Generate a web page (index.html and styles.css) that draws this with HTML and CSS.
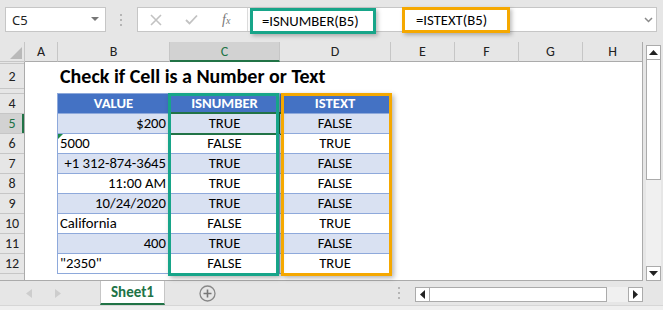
FILE: index.html
```html
<!DOCTYPE html>
<html lang="en">

<head>
    <meta charset="UTF-8">
    <title>Check if Cell is a Number or Text</title>
    <link rel="stylesheet" href="styles.css">
</head>

<body>
    <div class="app">
        <!-- name box + formula bar -->
        <div class="toolbar">
            <div class="namebox">
                <span>C5</span>
                <svg width="8" height="5" viewBox="0 0 8 5"><polygon points="0,0 8,0 4,4" fill="#777"></polygon></svg>
            </div>
            <div class="grip">
                <svg width="3" height="12" viewBox="0 0 3 12"><rect x="0" y="0" width="2" height="2" fill="#b5b5b5"></rect><rect x="0" y="5" width="2" height="2" fill="#b5b5b5"></rect><rect x="0" y="10" width="2" height="2" fill="#b5b5b5"></rect></svg>
            </div>
            <div class="fbar">
                <div class="fbtns">
                    <svg class="ico-x" width="12" height="12" viewBox="0 0 12 12"><path d="M1 1 L11 11 M11 1 L1 11" stroke="#c2c2c2" stroke-width="1.6" fill="none"></path></svg>
                    <svg class="ico-ok" width="13" height="11" viewBox="0 0 13 11"><path d="M1 6 L4.5 9.5 L12 1.5" stroke="#c2c2c2" stroke-width="1.8" fill="none"></path></svg>
                    <span class="fx">f<small>x</small></span>
                </div>
                <div class="finput">
                    <span class="fbox fbox-green">=ISNUMBER(B5)</span>
                    <span class="fbox fbox-orange">=ISTEXT(B5)</span>
                    <svg class="chev" width="9" height="6" viewBox="0 0 9 6"><path d="M1 1 L4.5 4.5 L8 1" stroke="#8a8a8a" stroke-width="1.5" fill="none"></path></svg>
                </div>
            </div>
        </div>

        <!-- sheet -->
        <div class="main">
            <div class="sheet">
                <div class="corner">
                    <svg width="25" height="20" viewBox="0 0 25 20"><polygon points="10,17 22,17 22,5" fill="#b9b9b9"></polygon></svg>
                </div>
                <div class="colheads">
                    <div class="ch ch-a">A</div>
                    <div class="ch ch-b">B</div>
                    <div class="ch ch-c on">C</div>
                    <div class="ch ch-d">D</div>
                    <div class="ch ch-e">E</div>
                    <div class="ch ch-e">F</div>
                    <div class="ch ch-e">G</div>
                    <div class="ch ch-h">H</div>
                </div>
                <div class="rowheads">
                    <!-- 1, 3행은 높이가 작아 번호가 안보임 -->
                    <div class="rh"></div>
                    <div class="rh">2</div>
                    <div class="rh"></div>
                    <div class="rh">4</div>
                    <div class="rh on">5</div>
                    <div class="rh">6</div>
                    <div class="rh">7</div>
                    <div class="rh">8</div>
                    <div class="rh">9</div>
                    <div class="rh">10</div>
                    <div class="rh">11</div>
                    <div class="rh">12</div>
                    <div class="rh rh-last"></div>
                </div>
                <div class="cells">
                    <div class="title">Check if Cell is a Number or Text</div>

                    <div class="tbl">
                        <div class="th">VALUE</div>
                        <div class="th">ISNUMBER</div>
                        <div class="th">ISTEXT</div>

                        <div class="td r band">$200</div>
                        <div class="td c band active">TRUE</div>
                        <div class="td c band">FALSE</div>

                        <div class="td l warn">5000</div>
                        <div class="td c">FALSE</div>
                        <div class="td c">TRUE</div>

                        <div class="td r band">+1 312-874-3645</div>
                        <div class="td c band">TRUE</div>
                        <div class="td c band">FALSE</div>

                        <div class="td r">11:00 AM</div>
                        <div class="td c">TRUE</div>
                        <div class="td c">FALSE</div>

                        <div class="td r band">10/24/2020</div>
                        <div class="td c band">TRUE</div>
                        <div class="td c band">FALSE</div>

                        <div class="td l">California</div>
                        <div class="td c">FALSE</div>
                        <div class="td c">TRUE</div>

                        <div class="td r band">400</div>
                        <div class="td c band">TRUE</div>
                        <div class="td c band">FALSE</div>

                        <div class="td l">"2350"</div>
                        <div class="td c">FALSE</div>
                        <div class="td c">TRUE</div>
                    </div>

                    <!-- highlight boxes over the table -->
                    <div class="hl hl-green"></div>
                    <div class="hl hl-orange"></div>
                </div>
            </div>

            <div class="vscroll">
                <div class="sbtn">
                    <svg width="9" height="5" viewBox="0 0 9 5"><polygon points="0,5 9,5 4.5,0" fill="#222"></polygon></svg>
                </div>
                <div class="vthumb"></div>
                <div class="strack"></div>
                <div class="sbtn">
                    <svg width="9" height="5" viewBox="0 0 9 5"><polygon points="0,0 9,0 4.5,5" fill="#222"></polygon></svg>
                </div>
            </div>
        </div>

        <!-- sheet tabs -->
        <div class="tabbar">
            <div class="tabnav">
                <svg width="6" height="9" viewBox="0 0 6 9"><polygon points="6,0 6,9 0,4.5" fill="#cdcdcd"></polygon></svg>
                <svg width="6" height="9" viewBox="0 0 6 9"><polygon points="0,0 0,9 6,4.5" fill="#cdcdcd"></polygon></svg>
            </div>
            <div class="tab">Sheet1</div>
            <div class="addsheet">
                <svg width="17" height="17" viewBox="0 0 17 17"><circle cx="8.5" cy="8.5" r="7.5" stroke="#888" stroke-width="1.3" fill="none"></circle><path d="M8.5 4.5 V12.5 M4.5 8.5 H12.5" stroke="#777" stroke-width="1.6"></path></svg>
            </div>
            <div class="grip grip-h">
                <svg width="3" height="12" viewBox="0 0 3 12"><rect x="0" y="0" width="2" height="2" fill="#b5b5b5"></rect><rect x="0" y="5" width="2" height="2" fill="#b5b5b5"></rect><rect x="0" y="10" width="2" height="2" fill="#b5b5b5"></rect></svg>
            </div>
            <div class="hscroll">
                <div class="sbtn">
                    <svg width="5" height="9" viewBox="0 0 5 9"><polygon points="5,0 5,9 0,4.5" fill="#222"></polygon></svg>
                </div>
                <div class="hthumb"></div>
                <div class="strack"></div>
                <div class="sbtn">
                    <svg width="5" height="9" viewBox="0 0 5 9"><polygon points="0,0 0,9 5,4.5" fill="#222"></polygon></svg>
                </div>
            </div>
        </div>
        <div class="status"></div>
    </div>
</body>

</html>
```

FILE: styles.css
```css
html,
body {
    margin: 0;
    padding: 0;
}

body {
    width: 663px;
    height: 310px;
    overflow: hidden;
    background: #e6e6e6;
    font-family: Carlito, Calibri, Lato, sans-serif;
    color: #000;
}

.app {
    display: flex;
    flex-direction: column;
    width: 663px;
    height: 310px;
}

/* 상단 이름상자 + 수식줄 */
.toolbar {
    display: flex;
    align-items: flex-start;
    height: 42px;
    box-sizing: border-box;
    padding: 7px 0 0 5px;
}

.namebox {
    display: flex;
    align-items: center;
    justify-content: space-between;
    width: 101px;
    height: 25px;
    box-sizing: border-box;
    padding: 0 6px 0 6px;
    background: #fff;
    border: 1px solid #c6c6c6;
    font: 13px "Noto Sans", sans-serif;
    color: #222;
}

.grip {
    display: flex;
    align-items: center;
    justify-content: center;
    width: 31px;
    height: 25px;
}

.fbar {
    display: flex;
    width: 520px;
    height: 25px;
    box-sizing: border-box;
    background: #fff;
    border: 1px solid #c6c6c6;
}

.fbtns {
    display: flex;
    align-items: center;
    width: 109px;
    padding-left: 12px;
    box-sizing: border-box;
}

.ico-ok {
    margin-left: 23px;
}

.fx {
    margin-left: 24px;
    font: italic 14px "Liberation Serif", serif;
    color: #777;
}

.fx small {
    font-size: 10px;
}

.finput {
    display: flex;
    align-items: flex-start;
    flex: 1;
    border-left: 1px solid #dcdcdc;
}

/* 수식 강조박스 */
.fbox {
    height: 26px;
    box-sizing: border-box;
    line-height: 20px;
    font-size: 14.7px;
    box-shadow: 2px 2px 4px rgba(0, 0, 0, .25);
    background: #fff;
}

.fbox-green {
    width: 126px;
    margin: 0 0 0 2px;
    padding-left: 9px;
    border: 3px solid #17a589;
}

.fbox-orange {
    width: 108px;
    margin: -1px 0 0 26px;
    padding-left: 11px;
    border: 3px solid #f5a800;
}

.chev {
    margin: 9px 3px 0 auto;
}

/* 시트영역 */
.main {
    display: flex;
    height: 239px;
}

.sheet {
    display: grid;
    grid-template-columns: 25px 618px;
    grid-template-rows: 20px 219px;
    background: #fff;
}

.corner {
    background: #e6e6e6;
    border-right: 1px solid #c6c6c6;
    border-bottom: 1px solid #c6c6c6;
    box-sizing: border-box;
}

.corner svg {
    display: block;
}

.colheads {
    display: flex;
    background: #e6e6e6;
}

.ch {
    height: 20px;
    box-sizing: border-box;
    border-right: 1px solid #c6c6c6;
    border-bottom: 1px solid #ababab;
    text-align: center;
    line-height: 20px;
    font-size: 14px;
    color: #222;
}

.ch-a { width: 33px; }
.ch-b { width: 112px; }
.ch-c { width: 110px; }
.ch-d { width: 111px; }
.ch-e { width: 64px; }
.ch-h { width: 60px; border-right: 1px solid #ababab; }

.ch.on {
    background: #d2d2d2;
    color: #217346;
    border-bottom: 2px solid #217346;
}

.rowheads {
    display: grid;
    grid-template-rows: 2px 25px 5px repeat(9, 20px) 1fr;
    background: #e6e6e6;
    border-right: 1px solid #ababab;
    border-bottom: 1px solid #ababab;
}

.rh {
    overflow: hidden;
    box-sizing: border-box;
    border-bottom: 1px solid #c6c6c6;
    display: flex;
    align-items: center;
    justify-content: center;
    font-size: 14px;
    color: #222;
}

.rh-last {
    border-bottom: 0;
}

.rh.on {
    background: #d2d2d2;
    color: #217346;
    box-shadow: inset -2px 0 0 #217346;
}

.cells {
    position: relative;
    box-sizing: border-box;
    border-right: 1px solid #ababab;
    border-bottom: 1px solid #ababab;
}

.title {
    height: 25px;
    margin: 2px 0 0 0;
    padding-left: 35px;
    line-height: 25px;
    font-size: 20px;
    font-weight: bold;
}

/* 표 */
.tbl {
    display: grid;
    grid-template-columns: 112px 110px 111px;
    grid-auto-rows: 20px;
    width: 334px;
    margin: 4px 0 0 32px;
    border-left: 1px solid #8ea9db;
    border-top: 1px solid #8ea9db;
    font-size: 14.7px;
}

.th,
.td {
    position: relative;
    box-sizing: border-box;
    border-right: 1px solid #8ea9db;
    border-bottom: 1px solid #8ea9db;
    line-height: 19px;
    white-space: nowrap;
}

.th {
    background: #4472c4;
    color: #fff;
    font-weight: bold;
    text-align: center;
}

.band {
    background: #d9e1f2;
}

.l { padding-left: 2px; }
.r { padding-right: 3px; text-align: right; }
.c { text-align: center; }

/* 텍스트로 저장된 숫자 표시 */
.warn::before {
    content: '';
    position: absolute;
    top: 0;
    left: 0;
    border-top: 5px solid #1e8a4c;
    border-right: 5px solid transparent;
}

/* 선택된 셀 */
.active::after {
    content: '';
    position: absolute;
    top: -2px;
    left: -1px;
    right: -2px;
    bottom: -2px;
    border: 2px solid #217346;
}

.hl {
    position: absolute;
    top: 31px;
    width: 111px;
    height: 183px;
    box-sizing: border-box;
    box-shadow: 2px 2px 5px rgba(0, 0, 0, .3);
}

.hl-green {
    left: 143px;
    border: 3px solid #17a589;
}

.hl-orange {
    left: 256px;
    border: 3px solid #f5a800;
}

/* 세로 스크롤바 */
.vscroll {
    display: flex;
    flex-direction: column;
    width: 15px;
    margin: 3px 2px 0 3px;
    background: #f0f0f0;
}

.sbtn {
    display: flex;
    align-items: center;
    justify-content: center;
    width: 15px;
    height: 15px;
    box-sizing: border-box;
    background: #fff;
    border: 1px solid #ababab;
}

.vthumb {
    height: 120px;
    box-sizing: border-box;
    background: #fff;
    border: 1px solid #ababab;
    border-top: 0;
}

.strack {
    flex: 1;
}

/* 시트탭 */
.tabbar {
    display: flex;
    align-items: flex-start;
    height: 24px;
}

.tabnav {
    display: flex;
    align-items: center;
    gap: 23px;
    width: 100px;
    height: 24px;
    padding-left: 26px;
    box-sizing: border-box;
}

.tab {
    width: 65px;
    height: 24px;
    box-sizing: border-box;
    background: #fff;
    border-left: 1px solid #c6c6c6;
    border-right: 1px solid #c6c6c6;
    border-bottom: 2px solid #217346;
    text-align: center;
    line-height: 22px;
    font-size: 15px;
    font-weight: bold;
    color: #217346;
}

.addsheet {
    margin: 4px 0 0 34px;
}

.addsheet svg {
    display: block;
}

.grip-h {
    width: 16px;
    height: 24px;
    margin: 0 8px 0 auto;
}

.hscroll {
    display: flex;
    width: 228px;
    height: 15px;
    margin: 6px 20px 0 0;
    background: #f0f0f0;
}

.hthumb {
    width: 177px;
    box-sizing: border-box;
    background: #fff;
    border: 1px solid #ababab;
    border-left: 0;
}

.status {
    flex: 1;
    border-top: 1px solid #d6d6d6;
    background: #efefef;
}
```
